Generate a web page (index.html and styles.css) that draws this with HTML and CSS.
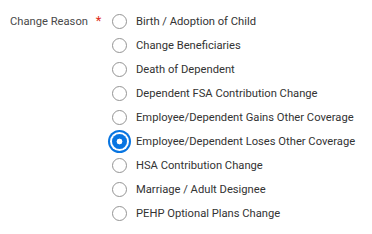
FILE: index.html
```html
<!DOCTYPE html>
<html lang="en">
<head>
  <meta charset="UTF-8" />
  <title>Change Reason</title>
  <link rel="stylesheet" href="styles.css">
</head>
<body>

  <div class="field">
    <div class="field-label">Change Reason <span class="required">*</span></div>
    <div class="options">
      <label class="option"><span class="radio"></span>Birth / Adoption of Child</label>
      <label class="option"><span class="radio"></span>Change Beneficiaries</label>
      <label class="option"><span class="radio"></span>Death of Dependent</label>
      <label class="option"><span class="radio"></span>Dependent FSA Contribution Change</label>
      <label class="option"><span class="radio"></span>Employee/Dependent Gains Other Coverage</label>
      <label class="option"><span class="radio checked"></span>Employee/Dependent Loses Other Coverage</label>
      <label class="option"><span class="radio"></span>HSA Contribution Change</label>
      <label class="option"><span class="radio"></span>Marriage / Adult Designee</label>
      <label class="option"><span class="radio"></span>PEHP Optional Plans Change</label>
    </div>
  </div>

</body>
</html>
```

FILE: styles.css
```css
body {
  margin: 0;
  background: #fff;
  color: #333;
  font-family: Roboto, "Liberation Sans", sans-serif;
  font-size: 11.2px;
}

.field {
  display: flex;
  padding: 9px 0 0 10px;
}

.field-label {
  width: 102px;
  height: 24px;
  line-height: 24px;
  color: #494949;
}

.required {
  color: #de2e21;
  font-size: 13px;
  margin-left: 5px;
}

.options {
  display: flex;
  flex-direction: column;
}

.option {
  display: flex;
  align-items: center;
  height: 24px;
}

.radio {
  box-sizing: border-box;
  width: 15px;
  height: 15px;
  border: 1px solid #949494;
  border-radius: 50%;
  margin-right: 9px;
}

.radio.checked {
  border: none;
  background: radial-gradient(circle, #fff 0 2.6px, #0875e1 3.2px);
  box-shadow: 0 0 0 2px #fff, 0 0 0 4px #0875e1;
}
```
